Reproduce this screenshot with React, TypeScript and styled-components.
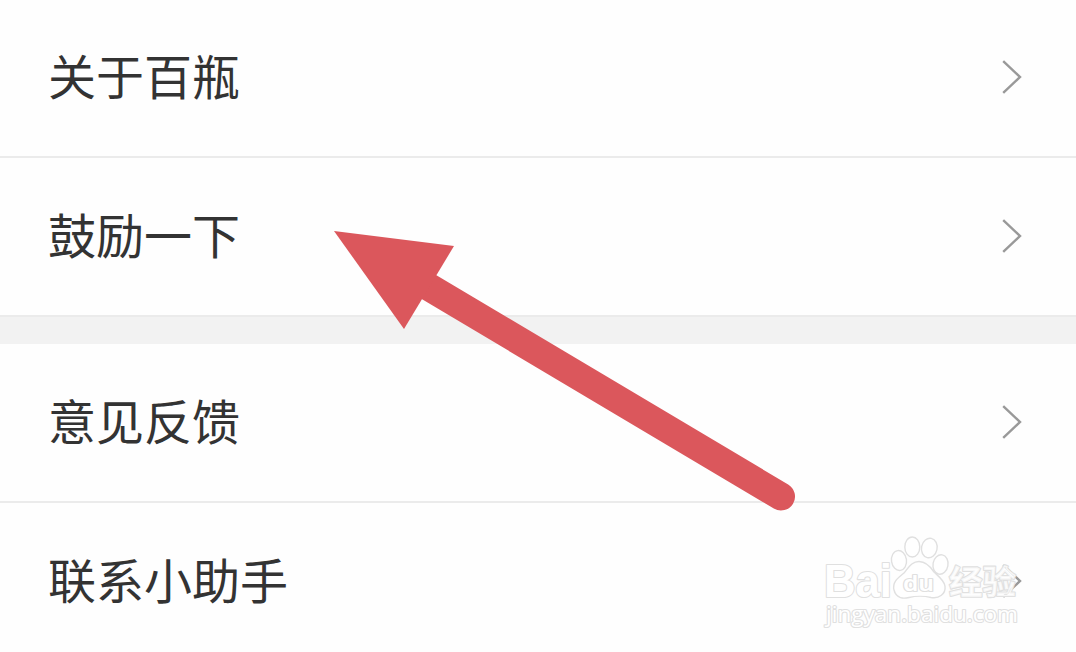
import styled, { createGlobalStyle } from "styled-components";

const GlobalStyle = createGlobalStyle`
  * {
    box-sizing: border-box;
  }
  body {
    margin: 0;
    background: #fefefe;
    overflow: hidden;
  }
`;

const Page = styled.main`
  position: relative;
  width: 1076px;
  height: 652px;
  overflow: hidden;
  background: #fefefe;
  font-family: "Noto Sans CJK SC", "Noto Sans", sans-serif;
`;

const Group = styled.section<{ $first?: boolean }>`
  display: flex;
  flex-direction: column;
  margin-top: ${(props) => (props.$first ? "-1px" : "0")};
`;

const Row = styled.div`
  display: flex;
  align-items: center;
  justify-content: space-between;
  height: 159px;
  padding: 0 54px 1px 48px;
  border-bottom: 2px solid #ebebeb;
`;

const Label = styled.span`
  padding-bottom: 6px;
  font-size: 48px;
  line-height: 72px;
  color: #333;
`;

const Gap = styled.div`
  height: 27px;
  background: #f2f2f2;
`;

const Chevron = styled.svg`
  display: block;
  width: 20px;
  height: 34px;
  fill: none;
  stroke: #999;
  stroke-width: 2.4;
`;

const Arrow = styled.svg`
  position: absolute;
  left: 0;
  top: 0;
  width: 1076px;
  height: 652px;
  pointer-events: none;
`;

const Watermark = styled.svg`
  position: absolute;
  left: 816px;
  top: 530px;
  width: 216px;
  height: 104px;
  pointer-events: none;
  fill: #fff;
  stroke: #e0e0e0;
  stroke-width: 1.4;
  stroke-linejoin: round;
  text {
    paint-order: stroke;
    stroke-width: 2.2;
  }
`;

const groups = [
  ["关于百瓶", "鼓励一下"],
  ["意见反馈", "联系小助手"],
];

const MenuRow = ({ label }: { label: string }) => (
  <Row>
    <Label>{label}</Label>
    <Chevron viewBox="0 0 20 34">
      <path d="M1.2 1.2 L18 17 L1.2 32.8" />
    </Chevron>
  </Row>
);

const App = () => {
  return (
    <Page>
      <GlobalStyle />
      <Group $first>
        {groups[0].map((label) => (
          <MenuRow key={label} label={label} />
        ))}
      </Group>
      <Gap />
      <Group>
        {groups[1].map((label) => (
          <MenuRow key={label} label={label} />
        ))}
      </Group>
      <Arrow viewBox="0 0 1076 652">
        <path d="M428 286.500 L781 496.500" stroke="#db575c" strokeWidth="28" strokeLinecap="round" />
        <path d="M334 231 L454 246 L404 329 Z" fill="#db575c" />
      </Arrow>
      <Watermark viewBox="0 0 216 104">
        <text x="8" y="66.500" fontFamily="Liberation Sans" fontWeight="700" fontSize="46" textLength="68" lengthAdjust="spacingAndGlyphs">
          Bai
        </text>
        {/* paw */}
        <ellipse cx="83" cy="30.500" rx="7.500" ry="10" transform="rotate(-8 83 30.500)" />
        <ellipse cx="96.300" cy="17" rx="7.500" ry="10" />
        <ellipse cx="113.300" cy="18" rx="7.800" ry="9.800" transform="rotate(12 113.300 18)" />
        <ellipse cx="124.500" cy="34.500" rx="7.500" ry="9.800" transform="rotate(10 124.500 34.500)" />
        <path d="M103 31.500 C96 31.500 93 37 88 43 C82 48 76 52 78 60 C80 68 87 69 93 67.500 C99 66 109 66 115 67.500 C123 69 130 64 129 56 C128 50 122 46 118 42 C114 36 110 31.500 103 31.500 Z" />
        <text x="87" y="61" fontFamily="Noto Sans" fontWeight="600" fontSize="21" textLength="31" lengthAdjust="spacingAndGlyphs">
          du
        </text>
        <text x="133" y="63.500" fontFamily="Noto Sans CJK SC" fontWeight="700" fontSize="33.500" textLength="67" fillOpacity="0.75">
          经验
        </text>
        <text x="10" y="91.500" fontFamily="Open Sans" fontWeight="500" fontSize="22" textLength="192" lengthAdjust="spacingAndGlyphs">
          jingyan.baidu.com
        </text>
      </Watermark>
    </Page>
  );
};

export default App;
